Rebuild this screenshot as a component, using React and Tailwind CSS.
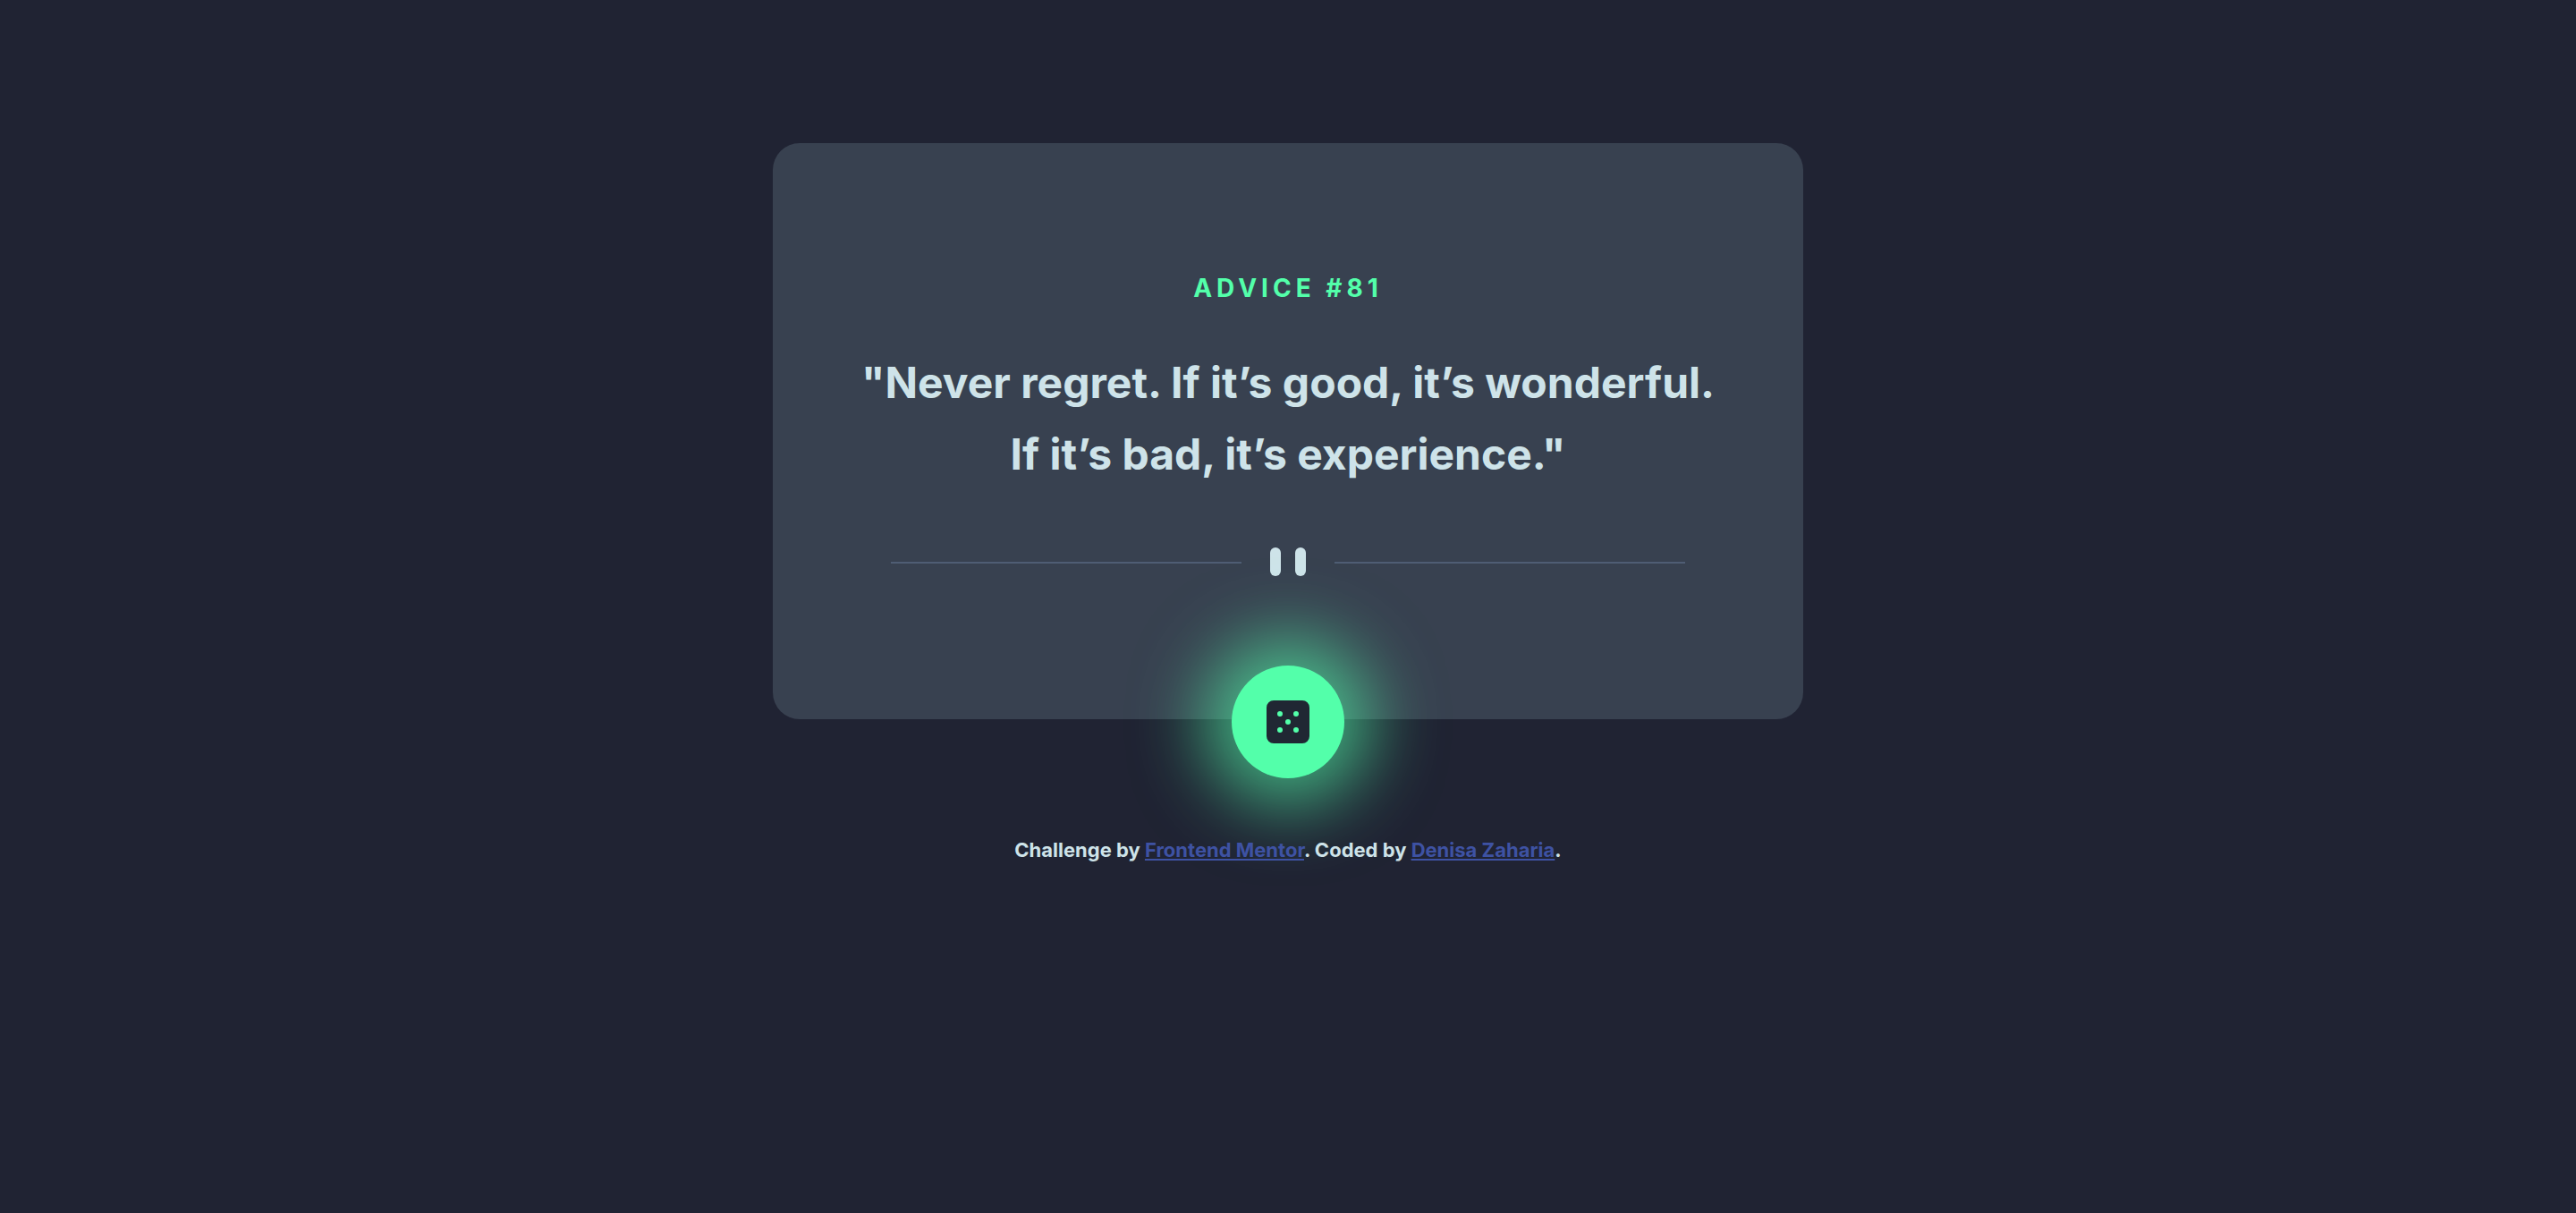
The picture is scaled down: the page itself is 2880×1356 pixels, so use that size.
function Divider() {
  return (
    <svg className="mt-16 h-8 w-[888px] max-w-full" viewBox="0 0 444 16" aria-hidden="true">
      <path fill="#4F5D74" d="M0 8h196v1H0zM248 8h196v1H248z" />
      <g transform="translate(212)" fill="#CEE3E9">
        <rect width="6" height="16" rx="3" />
        <rect x="14" width="6" height="16" rx="3" />
      </g>
    </svg>
  );
}

function DiceIcon() {
  return (
    <svg className="size-12" viewBox="0 0 24 24" aria-hidden="true">
      <path
        fill="#202733"
        d="M20 0H4a4.005 4.005 0 0 0-4 4v16a4.005 4.005 0 0 0 4 4h16a4.005 4.005 0 0 0 4-4V4a4.005 4.005 0 0 0-4-4ZM7.5 18a1.5 1.5 0 1 1 0-3 1.5 1.5 0 0 1 0 3Zm0-9a1.5 1.5 0 1 1 0-3 1.5 1.5 0 0 1 0 3Zm4.5 4.5a1.5 1.5 0 1 1 0-3 1.5 1.5 0 0 1 0 3Zm4.5 4.5a1.5 1.5 0 1 1 0-3 1.5 1.5 0 0 1 0 3Zm0-9a1.5 1.5 0 1 1 0-3 1.5 1.5 0 0 1 0 3Z"
      />
    </svg>
  );
}

export default function App() {
  return (
    <div className="flex min-h-screen flex-col items-center bg-[#202333] pt-40 font-['Inter',sans-serif] font-bold text-[#CEE3E9]">
      <main className="flex w-2/5 flex-col items-center rounded-[30px] bg-[#384150] px-24 pt-[142px] text-center">
        <h1 className="text-[28px] leading-10 tracking-[5px] text-[#53FFAA]">ADVICE #81</h1>
        <p className="mt-[46px] text-[48px] leading-20">
          "Never regret. If it’s good, it’s wonderful. If it’s bad, it’s experience."
        </p>
        <Divider />
        <button
          type="button"
          aria-label="New advice"
          className="mt-25 -mb-[66px] grid size-[126px] place-items-center rounded-full bg-[#53FFAA] shadow-[0_0_80px_30px_#53FFAAA6]"
        >
          <DiceIcon />
        </button>
      </main>
      <footer className="relative mt-[130px] text-[22px] leading-8">
        Challenge by{" "}
        <a href="#frontend-mentor" className="text-[#3E52A3] underline">Frontend Mentor</a>. Coded by{" "}
        <a href="#denisa-zaharia" className="text-[#3E52A3] underline">Denisa Zaharia</a>.
      </footer>
    </div>
  );
}
